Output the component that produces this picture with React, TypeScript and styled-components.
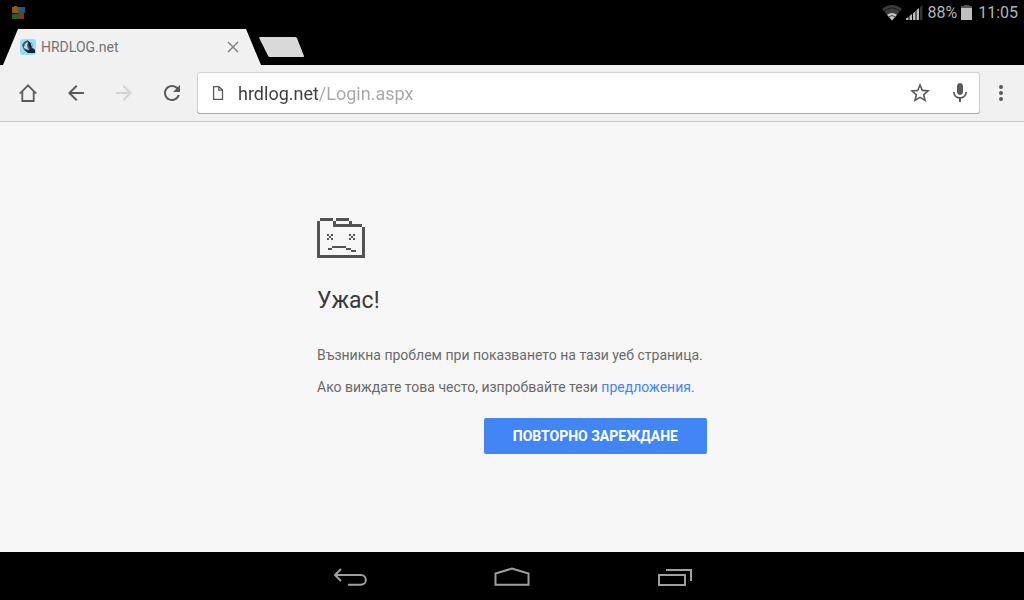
import React from 'react';
import styled, { createGlobalStyle } from 'styled-components';

const GlobalStyle = createGlobalStyle`
  *, *::before, *::after { box-sizing: border-box; }
  body {
    margin: 0;
    background: #000;
    font-family: Roboto, "Noto Sans", sans-serif;
  }
  svg { display: block; flex: none; }
  button {
    margin: 0;
    padding: 0;
    border: 0;
    background: none;
    font: inherit;
    color: inherit;
  }
`;

const Screen = styled.div`
  display: flex;
  flex-direction: column;
  min-height: 100vh;
`;

const StatusBar = styled.div`
  display: flex;
  align-items: center;
  justify-content: space-between;
  height: 25px;
  padding: 0 6px 0 12px;
  background: #000;
  color: #b4b4b4;
  font-size: 16px;
  line-height: 24px;
`;

const StatusItems = styled.div`
  display: flex;
  align-items: center;
  gap: 4px;
`;

const Clock = styled.time`
  margin-left: 2px;
`;

const TabStrip = styled.div`
  display: flex;
  align-items: flex-end;
  height: 40px;
  padding-left: 3px;
  background: #000;
`;

const Tab = styled.div`
  display: flex;
  align-items: center;
  width: 258px;
  height: 36px;
  padding: 0 18px 0 17px;
  gap: 5px;
  background: #f1f1f1;
  clip-path: polygon(15px 0, calc(100% - 15px) 0, 100% 100%, 0 100%);
`;

const TabTitle = styled.span`
  flex: 1;
  color: #747474;
  font-size: 14px;
  line-height: 20px;
`;

const CloseButton = styled.button`
  display: grid;
  place-items: center;
  width: 20px;
  height: 32px;
`;

const NewTabButton = styled.button`
  width: 46px;
  height: 20px;
  margin: 0 0 8px -2px;
`;

const Toolbar = styled.header`
  display: flex;
  align-items: center;
  height: 57px;
  padding: 0 2px 0 4px;
  background: #f1f1f1;
  border-bottom: 1px solid #c9c9c9;
`;

const IconButton = styled.button<{ $width: number; $faded?: boolean }>`
  display: grid;
  place-items: center;
  flex: none;
  width: ${(p) => p.$width}px;
  height: 40px;
  color: ${(p) => (p.$faded ? '#d3d3d3' : '#5a5a5a')};
`;

const Omnibox = styled.form`
  display: flex;
  align-items: center;
  flex: 1;
  min-width: 0;
  height: 42px;
  margin-left: 1px;
  padding-left: 15px;
  background: #fff;
  box-shadow: inset 0 -1px #a9a9a9, inset 0 0 0 1px #cfcfcf;
  border-radius: 3px;
  color: #5a5a5a;
`;

const UrlInput = styled.input`
  flex: 1;
  min-width: 0;
  height: 32px;
  margin-left: 14px;
  padding: 0;
  border: 0;
  outline: 0;
  font: 18px/24px Roboto, "Noto Sans", sans-serif;
  color: #333;
  background: linear-gradient(90deg, #3c3c3c 80px, #a6a6a6 80px);
  -webkit-background-clip: text;
  background-clip: text;
  -webkit-text-fill-color: transparent;
`;

const Page = styled.main`
  flex: 1;
  padding: 96px 16px 64px;
  background: #f7f7f7;
`;

const ErrorPanel = styled.section`
  display: flex;
  flex-direction: column;
  max-width: 390px;
  margin: 0 auto;
  color: #6a6a6a;
  font-size: 14px;
  line-height: 20px;
`;

const Heading = styled.h1`
  margin: 28px 0 29px;
  color: #3a3a3a;
  font-size: 23px;
  font-weight: 400;
  line-height: 30px;
`;

const Paragraph = styled.p`
  margin: 0 0 12px;
`;

const Link = styled.a`
  color: #4285f4;
  text-decoration: none;
`;

const ReloadButton = styled.button`
  align-self: flex-end;
  height: 36px;
  margin-top: 9px;
  padding: 0 29px;
  background: #4285f4;
  border-radius: 2px;
  color: #fff;
  font-size: 14px;
  font-weight: 700;
`;

const NavBar = styled.nav`
  display: flex;
  justify-content: center;
  height: 48px;
  background: #000;
`;

const NavButton = styled.button`
  display: grid;
  place-items: center;
  width: 162px;
  height: 48px;
`;

const AppNoticeIcon = () => (
  <svg width="13" height="14" viewBox="0 0 13 14" aria-hidden="true">
    <path d="M0 1h7v6H0z" fill="#87561a" />
    <path d="M7 1h6v6H6z" fill="#155f80" />
    <path d="M0 8l8-1v6H0z" fill="#295b25" />
    <path d="M7 6l5 1v6H7z" fill="#8c3017" />
    <path d="M2 0h3l1 6-4 1z" fill="#8f5a1c" />
  </svg>
);

const WifiIcon = () => (
  <svg width="20" height="16" viewBox="0 0 20 16" aria-hidden="true">
    <path d="M10 15.500L0 4Q10-4 20 4z" fill="#3d3d3d" />
    <path d="M2 6.200Q10-.4 18 6.200" fill="none" stroke="#000" strokeWidth=".6" />
    <path d="M10 15.500L5 9.700Q10 6.400 15 9.700z" fill="#c4c4c4" />
    <path d="M6.800 11.800Q10 9.300 13.200 11.800" fill="none" stroke="#444" />
  </svg>
);

const SignalIcon = () => (
  <svg width="17" height="16" viewBox="0 0 17 16" aria-hidden="true">
    <path d="M0 15v-1.500l2.500-1.500v3zM3.500 15v-4l2.500-2v6zM7 15V8.500L9.500 6v9zM10.500 15V5L13 3v12z" fill="#bcbcbc" />
    <path d="M14 15V2l2.500-2v15z" fill="#333" />
  </svg>
);

const BatteryIcon = () => (
  <svg width="11" height="16" viewBox="0 0 11 16" aria-hidden="true">
    <path d="M3 0h5v1h3v2H0V1h3z" fill="#555" />
    <path d="M0 3h11v12H0z" fill="#bfbfbf" />
  </svg>
);

const Favicon = () => (
  <svg width="16" height="16" viewBox="0 0 16 16" aria-hidden="true">
    <rect width="16" height="16" rx="3" fill="#98dcf5" />
    <path d="M2 6L4 3 8 1l4 3 1 5 2 2v3H8L4 11z" fill="#3c5566" />
    <path d="M4 9Q4 4 8 3L7 7l2 4-3-1z" fill="#b4dceb" />
    <path d="M8 2l3 2 2 7-4-3z" fill="#162430" />
    <path d="M8 1q4 2 4.500 8" fill="none" stroke="#c7edfa" strokeWidth=".8" />
    <path d="M5 11l4 1 1-3 5 2v3H8z" fill="#102235" />
  </svg>
);

const Glyph = ({ d }: { d: string }) => (
  <svg width="24" height="24" viewBox="0 0 24 24" fill="currentColor" aria-hidden="true">
    <path d={d} />
  </svg>
);

const glyphs = {
  back: 'M20 11H7.83l5.59-5.59L12 4l-8 8 8 8 1.41-1.41L7.83 13H20z',
  forward: 'M12 4l-1.41 1.41L16.17 11H4v2h12.170l-5.580 5.590L12 20l8-8z',
  reload:
    'M17.65 6.35C16.2 4.9 14.21 4 12 4c-4.42 0-7.99 3.58-7.99 8s3.57 8 7.99 8c3.73 0 6.84-2.55 7.73-6h-2.08c-.82 2.33-3.04 4-5.65 4-3.31 0-6-2.69-6-6s2.69-6 6-6c1.66 0 3.14.69 4.22 1.78L13 11h7V4z',
  star: 'M22 9.24l-7.19-.62L12 2 9.19 8.63 2 9.24l5.46 4.73L5.82 21 12 17.27 18.18 21l-1.63-7.03zM12 15.4l-3.76 2.27 1-4.28-3.32-2.88 4.38-.38L12 6.1l1.71 4.04 4.38.38-3.32 2.88 1 4.28z',
  mic: 'M12 14c1.66 0 3-1.34 3-3V5c0-1.66-1.34-3-3-3S9 3.34 9 5v6c0 1.66 1.34 3 3 3zm5.3-3c0 3-2.54 5.1-5.3 5.1S6.7 14 6.7 11H5c0 3.41 2.72 6.23 6 6.72V21h2v-3.28c3.28-.48 6-3.3 6-6.72z',
  more: 'M12 8a2 2 0 1 0 0-4 2 2 0 0 0 0 4zm0 2a2 2 0 1 0 0 4 2 2 0 0 0 0-4zm0 6a2 2 0 1 0 0 4 2 2 0 0 0 0-4z',
};

const HomeIcon = () => (
  <svg width="24" height="24" viewBox="0 0 24 24" fill="none" stroke="currentColor" strokeWidth="1.8" aria-hidden="true">
    <path d="M12 4.300L4.800 11.600H6.300V20H17.700V11.600H19.200z" />
  </svg>
);

const DocumentIcon = () => (
  <svg width="12" height="16" viewBox="0 0 12 16" fill="none" stroke="currentColor" strokeWidth="1.300" aria-hidden="true">
    <path d="M1.600 1.600H7L10.500 5V14.400H1.600zM6.800 1.600V5.200H10.500" />
  </svg>
);

const SadFolder = () => (
  <svg width="48" height="40" viewBox="0 0 48 40" fill="#535353" shapeRendering="crispEdges" role="img" aria-label="Грешка">
    <path d="M0 3h3v34h42V9h3v31H0zM3 0h13v3H3zM19 0h13v3H19zM32 3h3v3h-3zM16 3h3v3h26v3H16z" />
    <path d="M10 16h2v2h-2zM14 16h2v2h-2zM12 18h2v2h-2zM10 20h2v2h-2zM14 20h2v2h-2z" />
    <path d="M32 16h2v2h-2zM36 16h2v2h-2zM34 18h2v2h-2zM32 20h2v2h-2zM36 20h2v2h-2z" />
    <path d="M15 28h14v2H15zM11 30h4v2h-4zM29 30h5v2h-5zM34 32h5v2h-5z" />
  </svg>
);

const NavGlyph = ({ d }: { d: string }) => (
  <svg width="36" height="24" viewBox="0 0 36 24" fill="none" stroke="#a0a0a0" strokeWidth="2" aria-hidden="true">
    <path d={d} />
  </svg>
);

export default function App() {
  return (
    <Screen>
      <GlobalStyle />
      <StatusBar>
        <AppNoticeIcon />
        <StatusItems>
          <WifiIcon />
          <SignalIcon />
          <span>88%</span>
          <BatteryIcon />
          <Clock>11:05</Clock>
        </StatusItems>
      </StatusBar>

      <TabStrip>
        <Tab>
          <Favicon />
          <TabTitle>HRDLOG.net</TabTitle>
          <CloseButton type="button" aria-label="Затваряне на раздела">
            <svg width="12" height="12" viewBox="0 0 12 12" stroke="#858585" strokeWidth="1.500" aria-hidden="true">
              <path d="M1 1l10 10M11 1L1 11" />
            </svg>
          </CloseButton>
        </Tab>
        <NewTabButton type="button" aria-label="Нов раздел">
          <svg width="46" height="20" viewBox="0 0 46 20" fill="#d9d9d9" aria-hidden="true">
            <path d="M1 0H36q1.500 0 2 1.300L45 19q.3 1-.8 1H11q-1.500 0-2-1.300L.2 1Q0 0 1 0z" />
          </svg>
        </NewTabButton>
      </TabStrip>

      <Toolbar>
        <IconButton $width={48} type="button" aria-label="Начало"><HomeIcon /></IconButton>
        <IconButton $width={48} type="button" aria-label="Назад"><Glyph d={glyphs.back} /></IconButton>
        <IconButton $width={48} $faded type="button" disabled aria-label="Напред"><Glyph d={glyphs.forward} /></IconButton>
        <IconButton $width={48} type="button" aria-label="Презареждане"><Glyph d={glyphs.reload} /></IconButton>
        <Omnibox onSubmit={(e) => e.preventDefault()}>
          <DocumentIcon />
          <UrlInput type="text" aria-label="Адрес" defaultValue="hrdlog.net/Login.aspx" spellCheck={false} />
          <IconButton $width={40} type="button" aria-label="Отметка"><Glyph d={glyphs.star} /></IconButton>
          <IconButton $width={40} type="button" aria-label="Гласово търсене"><Glyph d={glyphs.mic} /></IconButton>
        </Omnibox>
        <IconButton $width={42} type="button" aria-label="Меню"><Glyph d={glyphs.more} /></IconButton>
      </Toolbar>

      <Page>
        <ErrorPanel>
          <SadFolder />
          <Heading>Ужас!</Heading>
          <Paragraph>Възникна проблем при показването на тази уеб страница.</Paragraph>
          <Paragraph>
            Ако виждате това често, изпробвайте тези <Link href="#suggestions">предложения</Link>.
          </Paragraph>
          <ReloadButton type="button">ПОВТОРНО ЗАРЕЖДАНЕ</ReloadButton>
        </ErrorPanel>
      </Page>

      <NavBar>
        <NavButton type="button" aria-label="Назад">
          <NavGlyph d="M9 5L3 11L9 17M3 11H29a4.800 4.800 0 0 1 0 9.700H16" />
        </NavButton>
        <NavButton type="button" aria-label="Начален екран">
          <NavGlyph d="M1.500 20.700V9.500L18 4.500L34.500 9.500V20.700z" />
        </NavButton>
        <NavButton type="button" aria-label="Скорошни приложения">
          <NavGlyph d="M3 11H29V21H3zM10 6H35V17" />
        </NavButton>
      </NavBar>
    </Screen>
  );
}
